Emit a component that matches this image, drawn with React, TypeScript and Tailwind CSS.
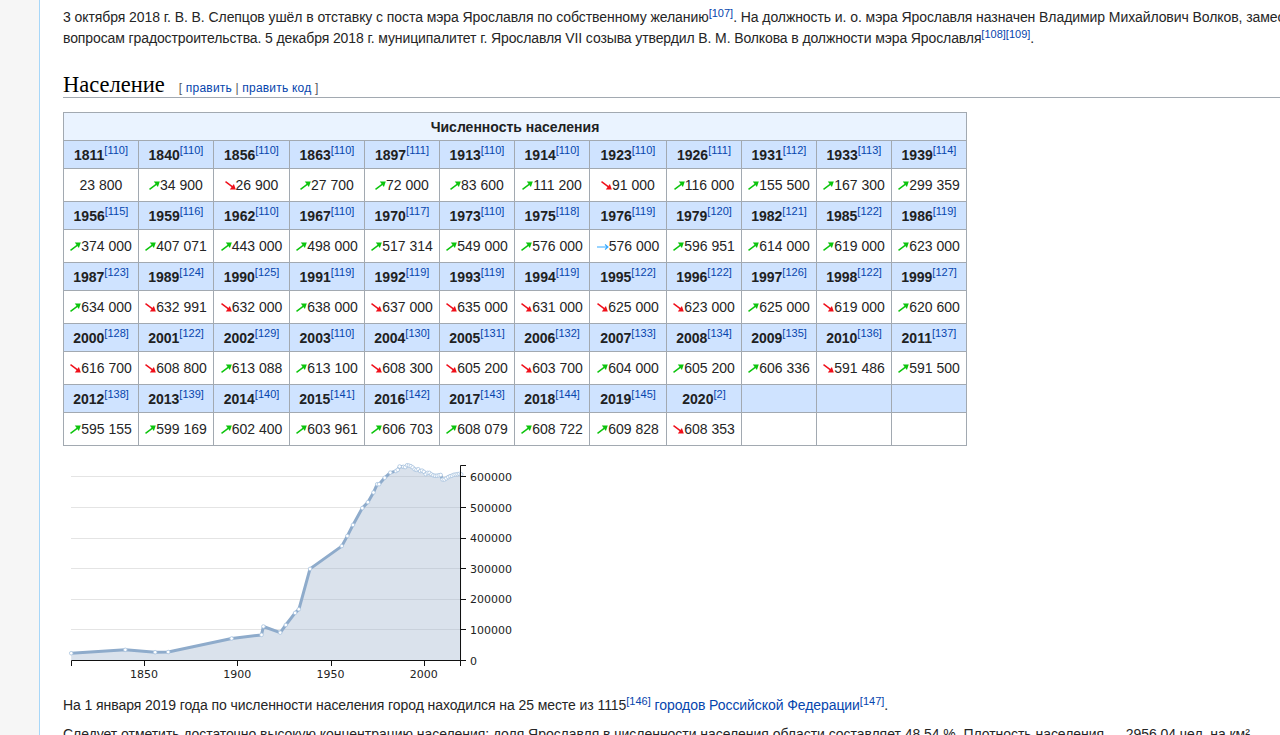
type Trend = "up" | "down" | "same" | "none";

type Entry = { year: number; ref: number; pop: number; trend: Trend };

const raw: [number, number, number, Trend][] = [
  [1811, 110, 23800, "none"], [1840, 110, 34900, "up"], [1856, 110, 26900, "down"], [1863, 110, 27700, "up"],
  [1897, 111, 72000, "up"], [1913, 110, 83600, "up"], [1914, 110, 111200, "up"], [1923, 110, 91000, "down"],
  [1926, 111, 116000, "up"], [1931, 112, 155500, "up"], [1933, 113, 167300, "up"], [1939, 114, 299359, "up"],
  [1956, 115, 374000, "up"], [1959, 116, 407071, "up"], [1962, 110, 443000, "up"], [1967, 110, 498000, "up"],
  [1970, 117, 517314, "up"], [1973, 110, 549000, "up"], [1975, 118, 576000, "up"], [1976, 119, 576000, "same"],
  [1979, 120, 596951, "up"], [1982, 121, 614000, "up"], [1985, 122, 619000, "up"], [1986, 119, 623000, "up"],
  [1987, 123, 634000, "up"], [1989, 124, 632991, "down"], [1990, 125, 632000, "down"], [1991, 119, 638000, "up"],
  [1992, 119, 637000, "down"], [1993, 119, 635000, "down"], [1994, 119, 631000, "down"], [1995, 122, 625000, "down"],
  [1996, 122, 623000, "down"], [1997, 126, 625000, "up"], [1998, 122, 619000, "down"], [1999, 127, 620600, "up"],
  [2000, 128, 616700, "down"], [2001, 122, 608800, "down"], [2002, 129, 613088, "up"], [2003, 110, 613100, "up"],
  [2004, 130, 608300, "down"], [2005, 131, 605200, "down"], [2006, 132, 603700, "down"], [2007, 133, 604000, "up"],
  [2008, 134, 605200, "up"], [2009, 135, 606336, "up"], [2010, 136, 591486, "down"], [2011, 137, 591500, "up"],
  [2012, 138, 595155, "up"], [2013, 139, 599169, "up"], [2014, 140, 602400, "up"], [2015, 141, 603961, "up"],
  [2016, 142, 606703, "up"], [2017, 143, 608079, "up"], [2018, 144, 608722, "up"], [2019, 145, 609828, "up"],
  [2020, 2, 608353, "down"],
];

const data: Entry[] = raw.map(([year, ref, pop, trend]) => ({ year, ref, pop, trend }));

const rows: (Entry | null)[][] = [];
for (let i = 0; i < 60; i += 12) {
  const row: (Entry | null)[] = [];
  for (let j = i; j < i + 12; j++) row.push(data[j] ?? null);
  rows.push(row);
}

const colWidths = ["w-[75px]", "w-[75px]", "w-[76px]", "w-[75px]", "w-[75px]", "w-[75px]", "w-[75px]", "w-[77px]", "w-[75px]", "w-[75px]", "w-[75px]", "w-[75px]"];

/* ---------------- Bits ---------------- */

function Arrow({ trend }: { trend: Trend }) {
  if (trend === "none") return null;
  if (trend === "same") {
    return (
      <svg width="12" height="8" viewBox="0 0 12 8" className="inline-block align-baseline">
        <path d="M0 4H10.5M8 1.5L11 4L8 6.5" fill="none" stroke="#35a9ff" strokeWidth="1.1" />
      </svg>
    );
  }
  const up = trend === "up";
  return (
    <svg width="11" height="9" viewBox="0 0 11 9" className="inline-block align-baseline">
      {up ? (
        <>
          <path d="M0.5 8.3L7.5 3.2" fill="none" stroke="#0cc40c" strokeWidth="1.5" />
          <path d="M4.8 0.6H10.8L8.9 6Z" fill="#0cc40c" />
        </>
      ) : (
        <>
          <path d="M0.5 0.7L7.5 5.8" fill="none" stroke="#f00f1a" strokeWidth="1.5" />
          <path d="M4.8 8.4H10.8L8.9 3Z" fill="#f00f1a" />
        </>
      )}
    </svg>
  );
}

function Ref({ n }: { n: number }) {
  return <sup className="text-[11px] font-normal tracking-normal text-[#0645ad]">[{n}]</sup>;
}

/* ---------------- Chart ---------------- */

const xOf = (year: number) => 8.2 + (year - 1811) * 1.866;
const yOf = (pop: number) => 201.5 - pop * 0.000306;

function PopulationChart() {
  const line = data.map((d) => `${xOf(d.year).toFixed(1)},${yOf(d.pop).toFixed(1)}`).join(" ");
  const area = `${xOf(1811)},201 ${line} ${xOf(2020)},201`;
  const yTicks = [0, 100000, 200000, 300000, 400000, 500000, 600000];
  const xTicks = [1850, 1900, 1950, 2000];

  return (
    <svg width="470" height="225" viewBox="0 0 470 225" className="mt-[13px] block">
      {yTicks.slice(1).map((t) => (
        <line key={t} x1="8" x2="398" y1={Math.floor(yOf(t)) + 0.5} y2={Math.floor(yOf(t)) + 0.5} stroke="#e4e4e4" strokeWidth="1" />
      ))}
      <polygon points={area} fill="#9db4cc" fillOpacity="0.38" />
      <polyline points={line} fill="none" stroke="#8eabcb" strokeWidth="3" strokeLinejoin="round" />
      {data.map((d) => (
        <circle key={d.year} cx={xOf(d.year)} cy={yOf(d.pop)} r="1.8" fill="#fff" stroke="#a9c4e0" strokeWidth="0.8" />
      ))}
      <path d="M8.5 201.5H403M8.5 201.5V207M81.5 201.5V207M174.5 201.5V207M268.5 201.5V207M361.5 201.5V207" fill="none" stroke="#111" strokeWidth="1" />
      <path d="M403 6.5H397.5V207" fill="none" stroke="#111" strokeWidth="1" />
      {yTicks.map((t) => (
        <g key={t}>
          <line x1="398" x2="403" y1={Math.floor(yOf(t)) + 0.5} y2={Math.floor(yOf(t)) + 0.5} stroke="#111" strokeWidth="1" />
          <text x="407" y={yOf(t) + 4} fontSize="11" fill="#222" className="font-['DejaVu_Sans',sans-serif]">{t}</text>
        </g>
      ))}
      {xTicks.map((t) => (
        <text key={t} x={xOf(t)} y="219" textAnchor="middle" fontSize="11" fill="#222" className="font-['DejaVu_Sans',sans-serif]">{t}</text>
      ))}
    </svg>
  );
}

/* ---------------- Page ---------------- */

export default function App() {
  return (
    <div className="flex h-[735px] w-full overflow-hidden bg-white font-['Liberation_Sans',Arial,sans-serif] text-sm text-[#252525]">

      {/* Sidebar */}
      <aside className="w-10 shrink-0 border-r border-[#a7d7f9] bg-[#f6f6f6]" />

      <main className="min-w-0 flex-1 overflow-hidden pl-[23px]">

        {/* Intro */}
        <p className="whitespace-nowrap pt-[7px] leading-[21px] tracking-[-0.075px]">
          3 октября 2018 г. В. В. Слепцов ушёл в отставку с поста мэра Ярославля по собственному желанию<Ref n={107} />. На должность и. о. мэра Ярославля назначен Владимир Михайлович Волков, заместитель мэра по
          <br />
          <span className="tracking-[-0.11px]">вопросам градостроительства. 5 декабря 2018 г. муниципалитет г. Ярославля VII созыва утвердил В. М. Волкова в должности мэра Ярославля</span><Ref n={108} /><Ref n={109} />.
        </p>

        {/* Heading */}
        <h2 className="mt-[20px] flex h-[29px] items-baseline border-b border-[#a2a9b1] pt-[2px] font-['Liberation_Serif',serif] text-[22.5px] leading-[28px] text-black">
          Население
          <span className="ml-[14px] font-['Liberation_Sans',Arial,sans-serif] text-xs tracking-[0.2px] text-[#54595d]">
            [ <a className="text-[#0645ad]">править</a> | <a className="text-[#0645ad]">править код</a> ]
          </span>
        </h2>

        {/* Population table */}
        <table className="mt-[14px] w-[904px] table-fixed border-collapse text-center">
          <colgroup>
            {colWidths.map((w, i) => <col key={i} className={w} />)}
          </colgroup>
          <tbody>
            <tr className="h-[28px]">
              <th colSpan={12} className="border border-[#a2a9b1] bg-[#eaf3ff] p-0 text-sm font-bold text-[#202122]">Численность населения</th>
            </tr>
            {rows.map((row, r) => (
              <Rows key={r} row={row} />
            ))}
          </tbody>
        </table>

        <PopulationChart />

        {/* Below chart */}
        <p className="mt-[10px] whitespace-nowrap leading-[22px] tracking-[-0.075px]">
          На 1 января 2019 года по численности населения город находился на 25 месте из 1115<Ref n={146} /> <a className="text-[#0645ad]">городов Российской Федерации</a><Ref n={147} />.
        </p>
        <p className="mt-[7px] whitespace-nowrap leading-[22px] tracking-[-0.04px]">
          Следует отметить достаточно высокую концентрацию населения: доля Ярославля в численности населения области составляет 48,54 %. Плотность населения — 2956,04 чел. на км²
        </p>
      </main>
    </div>
  );
}

function Rows({ row }: { row: (Entry | null)[] }) {
  return (
    <>
      <tr className="h-[28px]">
        {row.map((c, i) => (
          <th key={i} className="border border-[#a2a9b1] bg-[#cfe3ff] p-0 font-bold text-[#202122]">
            {c && <>{c.year}<Ref n={c.ref} /></>}
          </th>
        ))}
      </tr>
      <tr className="h-[33px]">
        {row.map((c, i) => (
          <td key={i} className="border border-[#a2a9b1] bg-white p-0 whitespace-nowrap">
            {c && <><Arrow trend={c.trend} />{c.pop.toLocaleString("ru-RU").replace(/\s/g, " ")}</>}
          </td>
        ))}
      </tr>
    </>
  );
}
